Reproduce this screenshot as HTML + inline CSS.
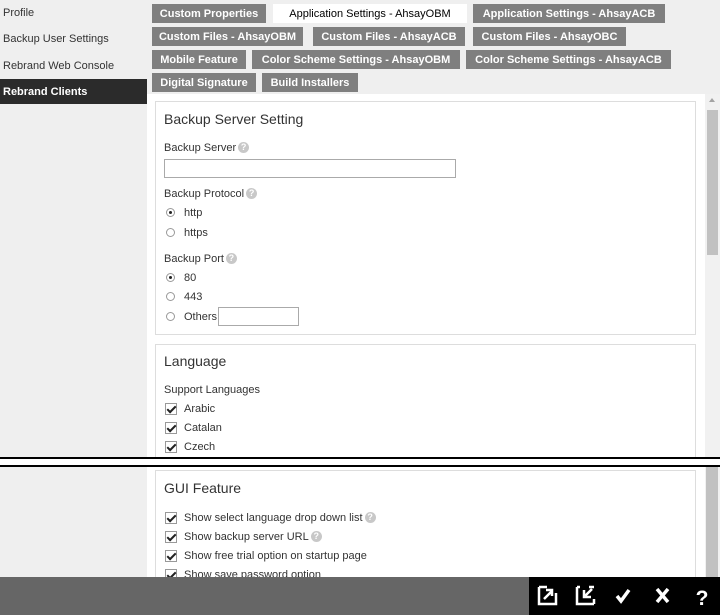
<!DOCTYPE html>
<html><head><style>
*{box-sizing:border-box;margin:0;padding:0}
body{width:720px;height:615px;overflow:hidden;position:relative;background:#efefef;font-family:"Liberation Sans",Arial,sans-serif;font-size:11px;color:#333}
.abs{position:absolute}
.side div{position:absolute;left:0;width:147px;height:25px;line-height:27px;padding-left:3px;font-size:11px;color:#333}
.tab{position:absolute;height:19px;line-height:20px;background:#7f7f7f;color:#fff;font-weight:bold;font-size:11px;text-align:center;white-space:nowrap}
.tab.act{background:#fff;color:#000;font-weight:normal}
.card{position:absolute;left:155px;width:541px;background:#fff;border:1px solid #ddd}
h3{position:absolute;left:8px;font-size:14px;font-weight:bold;color:#333;font-weight:normal}
.lbl{position:absolute;left:8px;font-size:11px}
.q{display:inline-block;width:11px;height:11px;border-radius:50%;background:#c8c8c8;color:#fff;font-size:9px;font-weight:bold;text-align:center;line-height:11px;vertical-align:1px;margin-left:2px}
.rad{position:absolute;left:10px;width:9px;height:9px;border:1px solid #999;border-radius:50%;background:#fff}
.rad.on::after{content:"";position:absolute;left:2px;top:2px;width:3px;height:3px;border-radius:50%;background:#222}
.cb{position:absolute;left:9px;width:12px;height:12px;border:1px solid #999;background:#fff}
.cb::after{content:"";position:absolute;left:3px;top:0px;width:3px;height:7px;border:solid #222;border-width:0 2px 2px 0;transform:rotate(45deg)}
.t{position:absolute;left:28px;font-size:11px}
</style></head><body>
<div class="side">
<div style="top:0">Profile</div>
<div style="top:26px">Backup User Settings</div>
<div style="top:53px">Rebrand Web Console</div>
<div style="top:79px;background:#2b2b2b;color:#fff;font-weight:bold">Rebrand Clients</div>
</div>
<div class="tab" style="left:152px;top:4px;width:114px">Custom Properties</div>
<div class="tab act" style="left:273px;top:4px;width:194px">Application Settings - AhsayOBM</div>
<div class="tab" style="left:473px;top:4px;width:192px">Application Settings - AhsayACB</div>
<div class="tab" style="left:152px;top:27px;width:151px">Custom Files - AhsayOBM</div>
<div class="tab" style="left:313px;top:27px;width:152px">Custom Files - AhsayACB</div>
<div class="tab" style="left:473px;top:27px;width:153px">Custom Files - AhsayOBC</div>
<div class="tab" style="left:152px;top:50px;width:94px">Mobile Feature</div>
<div class="tab" style="left:252px;top:50px;width:208px">Color Scheme Settings - AhsayOBM</div>
<div class="tab" style="left:466px;top:50px;width:205px">Color Scheme Settings - AhsayACB</div>
<div class="tab" style="left:152px;top:73px;width:104px">Digital Signature</div>
<div class="tab" style="left:262px;top:73px;width:96px">Build Installers</div>
<div class="abs" style="left:147px;top:94px;width:558px;height:364px;background:#fff"></div>
<div class="abs" style="left:705px;top:94px;width:15px;height:364px;background:#f1f1f1"></div>
<div class="abs" style="left:707px;top:110px;width:11px;height:145px;background:#c1c1c1"></div>
<div class="abs" style="left:709px;top:98px;width:0;height:0;border:3px solid transparent;border-bottom:4px solid #a3a3a3;border-top:0"></div>
<div class="card" style="top:101px;height:234px">
<h3 style="top:9px">Backup Server Setting</h3>
<div class="lbl" style="top:40px">Backup Server<span class="q">?</span></div>
<div class="abs" style="left:8px;top:57px;width:292px;height:19px;border:1px solid #aaa"></div>
<div class="lbl" style="top:86px">Backup Protocol<span class="q">?</span></div>
<div class="rad on" style="top:106px"></div><div class="t" style="top:105px">http</div>
<div class="rad" style="top:126px"></div><div class="t" style="top:125px">https</div>
<div class="lbl" style="top:151px">Backup Port<span class="q">?</span></div>
<div class="rad on" style="top:171px"></div><div class="t" style="top:170px">80</div>
<div class="rad" style="top:190px"></div><div class="t" style="top:189px">443</div>
<div class="rad" style="top:210px"></div><div class="t" style="top:209px">Others</div>
<div class="abs" style="left:62px;top:205px;width:81px;height:19px;border:1px solid #aaa"></div>
</div>
<div class="card" style="top:344px;height:130px">
<h3 style="top:8px">Language</h3>
<div class="lbl" style="top:39px">Support Languages</div>
<div class="cb" style="top:58px"></div><div class="t" style="top:58px">Arabic</div>
<div class="cb" style="top:77px"></div><div class="t" style="top:77px">Catalan</div>
<div class="cb" style="top:96px"></div><div class="t" style="top:96px">Czech</div>
</div>
<div class="abs" style="left:0;top:457px;width:720px;height:10px;background:#fff;border-top:2px solid #000;border-bottom:2px solid #000"></div>
<div class="abs" style="left:0;top:467px;width:147px;height:110px;background:#efefef"></div>
<div class="abs" style="left:147px;top:467px;width:558px;height:110px;background:#fff"></div>
<div class="abs" style="left:705px;top:467px;width:15px;height:110px;background:#f1f1f1"></div>
<div class="abs" style="left:706px;top:467px;width:12px;height:110px;background:#c1c1c1"></div>
<div class="card" style="top:470px;height:120px">
<h3 style="top:9px">GUI Feature</h3>
<div class="cb" style="top:41px"></div><div class="t" style="top:41px">Show select language drop down list<span class="q">?</span></div>
<div class="cb" style="top:60px"></div><div class="t" style="top:60px">Show backup server URL<span class="q">?</span></div>
<div class="cb" style="top:79px"></div><div class="t" style="top:79px">Show free trial option on startup page</div>
<div class="cb" style="top:98px"></div><div class="t" style="top:98px">Show save password option</div>
</div>
<div class="abs" style="left:0;top:577px;width:720px;height:38px;background:#666"></div>
<div class="abs" style="left:529px;top:577px;width:191px;height:38px;background:#000"></div>
<svg class="abs" style="left:529px;top:577px" width="191" height="38" viewBox="0 0 191 38">
<g fill="none" stroke="#fff" stroke-width="2.5">
<path d="M10 10v17h17V16M10 10h8"/>
<path d="M15 22l8-8M17 13h6v6"/>
<path d="M48 10v17h17M48 10h3M65 27v-5M60 10h5"/>
<path d="M63 12l-7 7M55 13v7h7"/>
<path d="M88 19l4 5l8-11" stroke-width="3.5"/>
<path d="M128 12l11 13M139 12l-11 13" stroke-width="3.5"/>
</g>
<text x="173" y="28" fill="#fff" font-family="Liberation Sans" font-weight="bold" font-size="21" text-anchor="middle">?</text>
</svg>
</body></html>
